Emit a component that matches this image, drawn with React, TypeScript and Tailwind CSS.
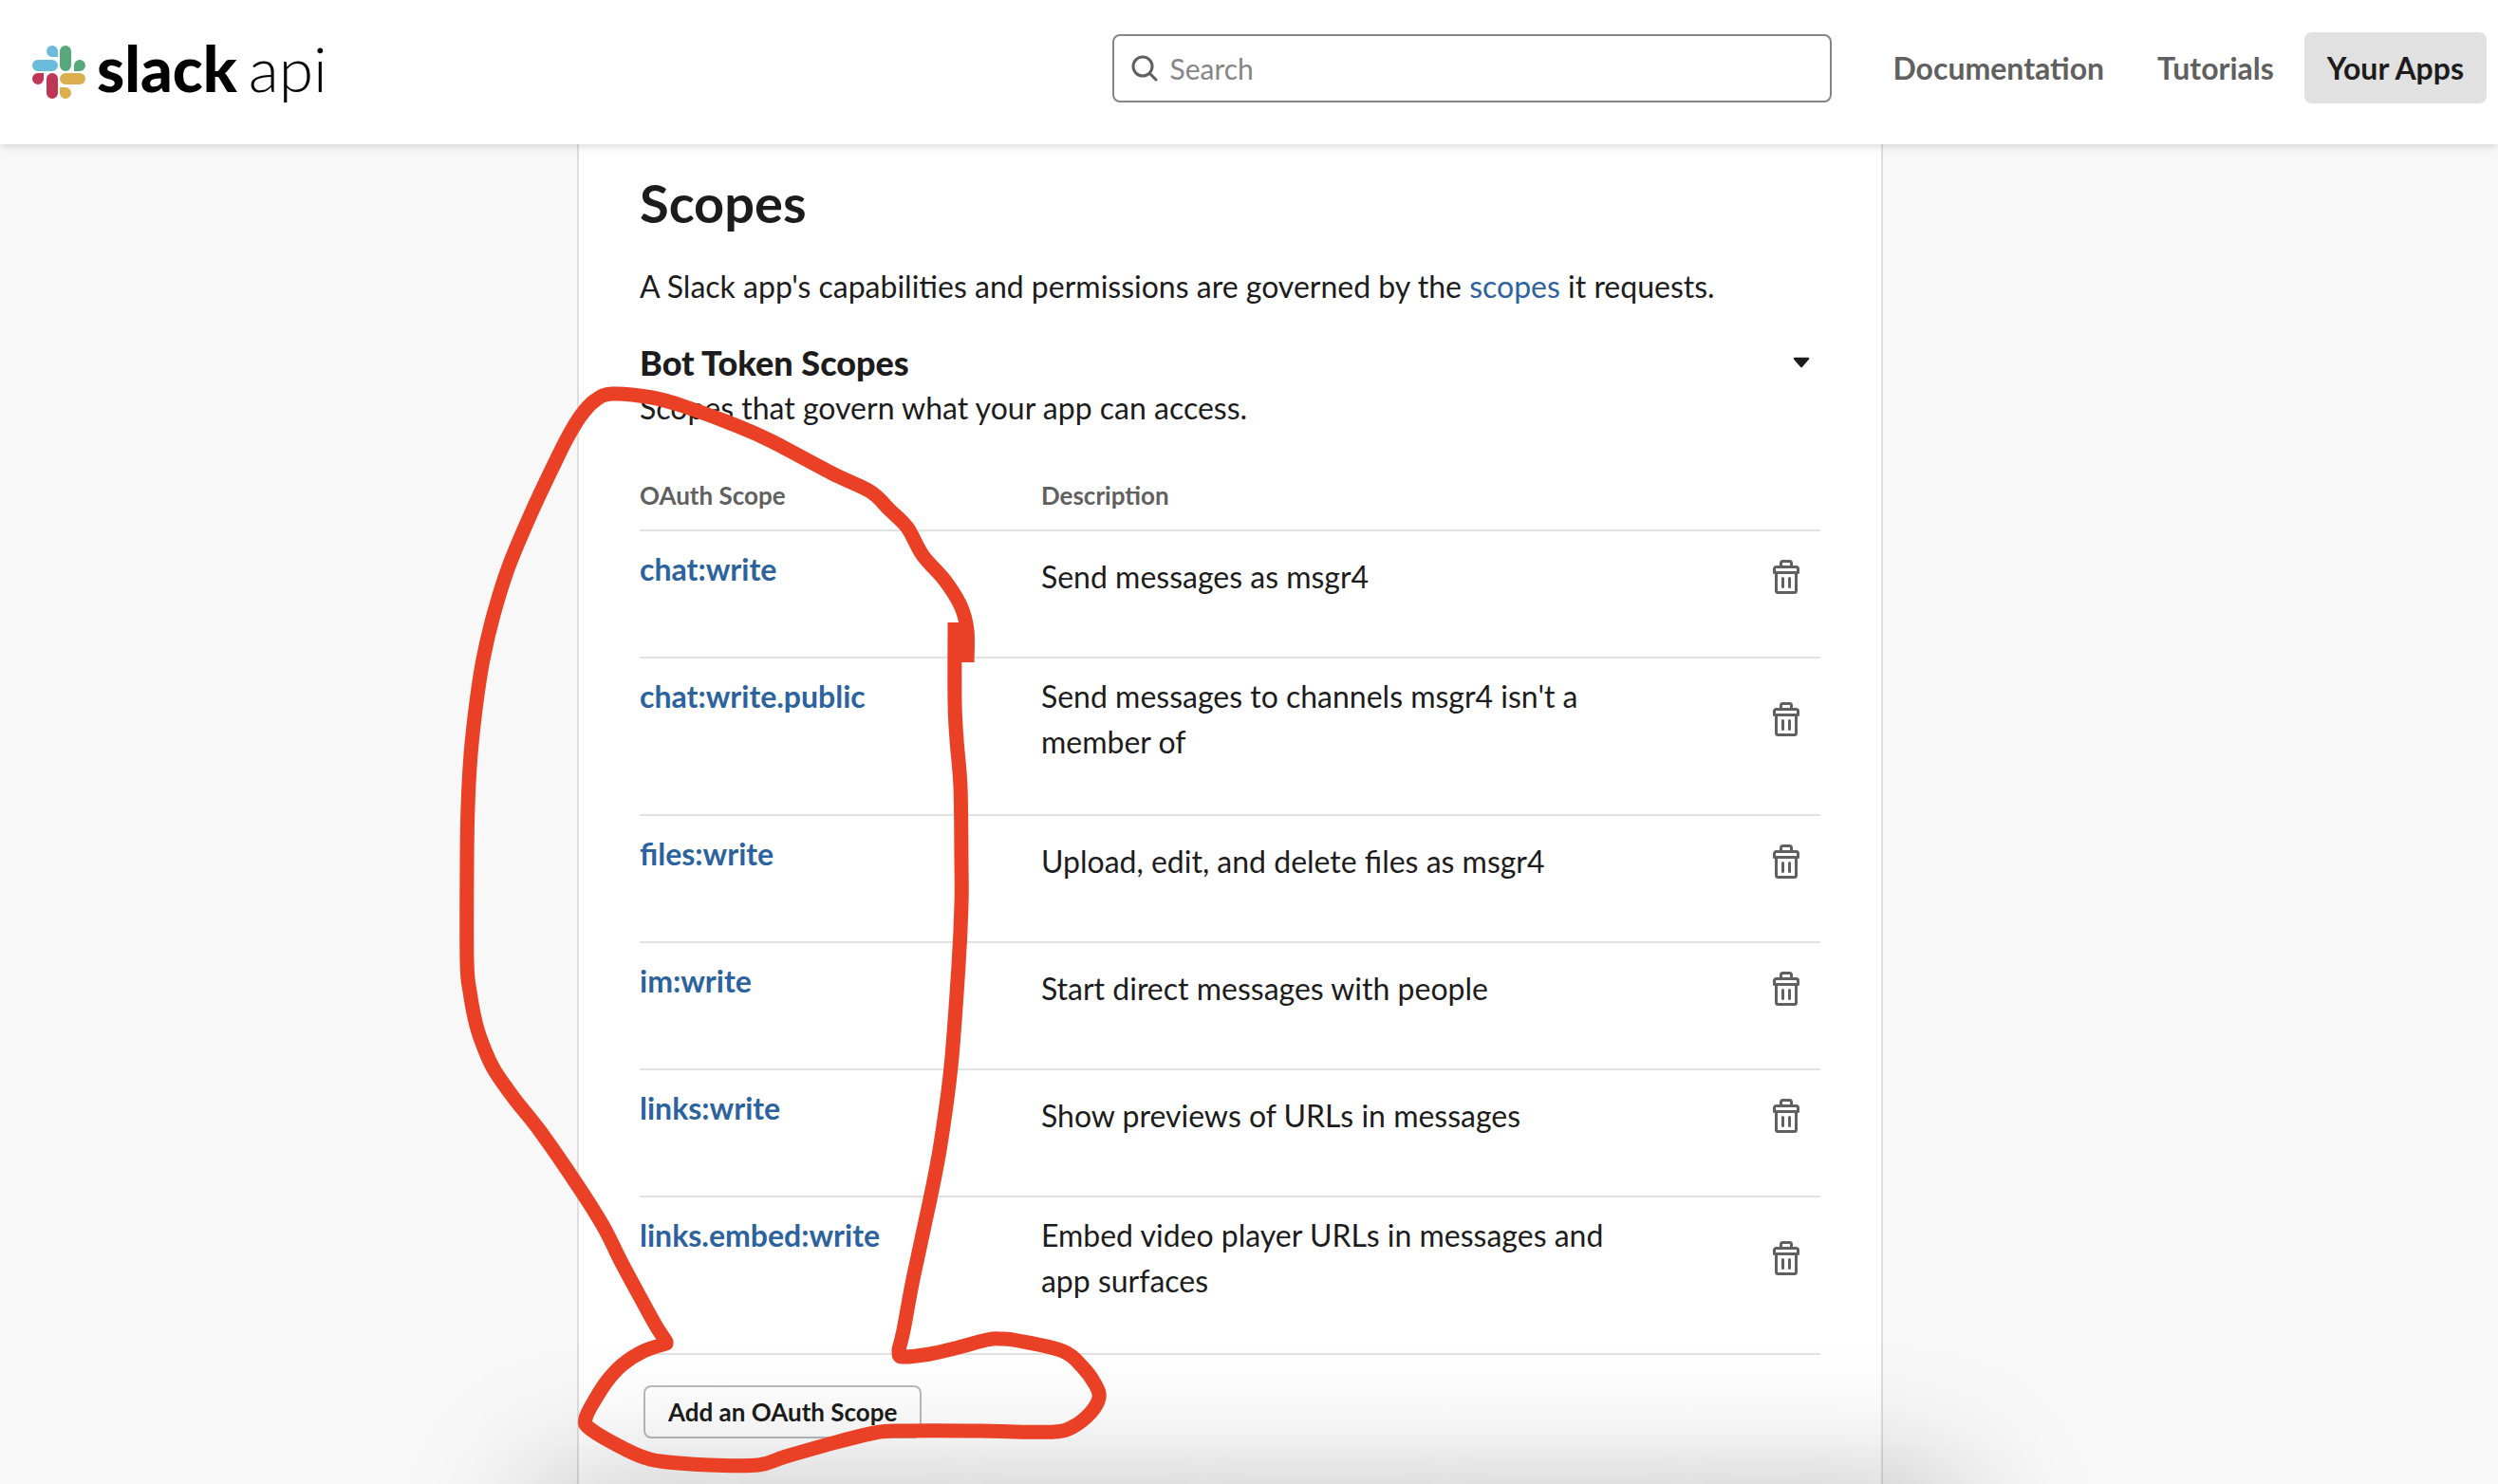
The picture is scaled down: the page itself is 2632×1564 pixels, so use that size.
import React from "react";

type Point = [number, number];

const scopes = [
  { name: "chat:write", description: "Send messages as msgr4" },
  { name: "chat:write.public", description: "Send messages to channels msgr4 isn't a member of" },
  { name: "files:write", description: "Upload, edit, and delete files as msgr4" },
  { name: "im:write", description: "Start direct messages with people" },
  { name: "links:write", description: "Show previews of URLs in messages" },
  { name: "links.embed:write", description: "Embed video player URLs in messages and app surfaces" },
];

// Three runs of the hand-drawn marker line; each starts where the previous one ends.
const markerRuns: Point[][] = [
  [
    [1019, 698], [1019, 664], [1012, 638], [995, 611], [972, 585], [956, 556], [937, 537], [917, 518],
    [877, 499], [813, 465], [777, 449], [720, 428], [687, 419], [645, 415], [627, 422], [612, 438],
    [598, 461], [584, 489], [560, 540], [536, 597], [520, 648], [509, 695], [502, 740], [496, 795],
    [493, 850], [492, 910], [492, 1013], [495, 1045], [502, 1081], [511, 1107], [521, 1128],
    [542, 1158], [569, 1192], [609, 1250], [636, 1293], [654, 1329], [675, 1368], [691, 1397], [702, 1414],
  ],
  [
    [702, 1416], [678, 1424], [656, 1438], [640, 1455], [627, 1475], [617, 1495], [622, 1506],
    [658, 1527], [685, 1538], [715, 1542], [747, 1544], [799, 1544], [828, 1535], [881, 1520],
    [922, 1510], [948, 1508], [1033, 1508], [1069, 1509], [1111, 1509], [1130, 1504], [1149, 1489],
    [1158, 1473], [1154, 1459], [1140, 1440], [1120, 1424], [1073, 1413], [1055, 1411], [1040, 1412],
    [1006, 1421], [980, 1427], [951, 1430], [947, 1426],
  ],
  [
    [947, 1422], [952, 1402], [962, 1348], [980, 1264], [991, 1206], [1002, 1124], [1010, 1017],
    [1013, 953], [1013, 910], [1012, 830], [1008, 780], [1006, 740], [1006, 656],
  ],
];

function smooth(points: Point[]): string {
  return points
    .slice(1)
    .map((end, i) => {
      const start = points[i];
      const before = points[i - 1] ?? start;
      const after = points[i + 2] ?? end;
      const c1 = [start[0] + (end[0] - before[0]) / 6, start[1] + (end[1] - before[1]) / 6];
      const c2 = [end[0] - (after[0] - start[0]) / 6, end[1] - (after[1] - start[1]) / 6];
      return `C${c1.join(" ")} ${c2.join(" ")} ${end.join(" ")}`;
    })
    .join(" ");
}

const markerPath = markerRuns
  .map((run, i) => `${i === 0 ? "M" : "L"}${run[0].join(" ")} ${smooth(run)}`)
  .join(" ");

function SlackMark() {
  return (
    <svg viewBox="0 0 56 56" className="size-14" aria-hidden="true">
      <path fill="#6ABBDC" d="M21 0a6 6 0 0 0 0 12h6V6a6 6 0 0 0-6-6ZM6 15a6 6 0 0 0 0 12h15a6 6 0 0 0 0-12Z" />
      <path fill="#57A97C" d="M35 0a6 6 0 0 0-6 6v15a6 6 0 0 0 12 0V6a6 6 0 0 0-6-6ZM56 21a6 6 0 0 0-12 0v6h6a6 6 0 0 0 6-6Z" />
      <path fill="#BF3756" d="M0 35a6 6 0 0 0 12 0v-6H6a6 6 0 0 0-6 6ZM21 29a6 6 0 0 0-6 6v15a6 6 0 0 0 12 0V35a6 6 0 0 0-6-6Z" />
      <path fill="#DBAF4E" d="M35 56a6 6 0 0 0 0-12h-6v6a6 6 0 0 0 6 6ZM50 41a6 6 0 0 0 0-12H35a6 6 0 0 0 0 12Z" />
    </svg>
  );
}

function TrashIcon() {
  return (
    <svg viewBox="0 0 28 36" className="h-9 w-7" fill="none" stroke="#616061" strokeWidth="3" strokeLinejoin="round" strokeLinecap="round" aria-hidden="true">
      <path d="M8.500 7V3.500a2 2 0 0 1 2-2h7a2 2 0 0 1 2 2V7" />
      <path d="M1.500 13.500v-4a2 2 0 0 1 2-2h21a2 2 0 0 1 2 2v4Z" />
      <path d="M3.500 14v18.500a2 2 0 0 0 2 2h17a2 2 0 0 0 2-2V14M10.500 19.500v9M17.500 19.500v9" />
    </svg>
  );
}

function Header() {
  return (
    <header className="relative z-10 flex h-[152px] shrink-0 items-start bg-white pr-3 pl-[34px] shadow-[0_1px_10px_rgba(0,0,0,0.18)]">
      <a href="#home" className="mt-9 flex h-20 items-center gap-3 text-black" aria-label="slack api">
        <SlackMark />
        <span className="flex items-baseline gap-3 pb-2 text-[66px] leading-[80px]">
          <span className="font-black">slack</span>
          <span className="font-light">api</span>
        </span>
      </a>
      <label className="mt-9 ml-auto flex h-[72px] w-[758px] items-center gap-3 rounded-lg border-2 border-[#868686] pl-[18px]">
        <svg viewBox="0 0 28 28" className="size-7" fill="none" stroke="#616061" strokeWidth="3" strokeLinecap="round" aria-hidden="true">
          <circle cx="12" cy="12" r="10" />
          <path d="m19.500 19.500 6.500 6.500" />
        </svg>
        <input type="text" placeholder="Search" aria-label="Search" className="min-w-0 flex-1 text-[30px] outline-none placeholder:text-[#868686]" />
      </label>
      <nav className="mt-[34px] ml-10 flex gap-2 text-[32px] leading-[75px] font-bold text-[#616061]">
        <a href="#documentation" className="px-6">Documentation</a>
        <a href="#tutorials" className="px-6">Tutorials</a>
        <a href="#apps" className="rounded-lg bg-[#e1e1e1] px-6 text-[#1d1c1d]">Your Apps</a>
      </nav>
    </header>
  );
}

function ScopeTable() {
  return (
    <table className="w-full table-fixed border-separate border-spacing-0 text-left">
      <thead className="text-[26px] leading-10 text-[#616061]">
        <tr>
          <th scope="col" className="w-[34%] border-b-2 border-[#e1e1e1] pb-4 font-bold">OAuth Scope</th>
          <th scope="col" className="w-1/2 border-b-2 border-[#e1e1e1] pb-4 font-bold">Description</th>
          <td className="border-b-2 border-[#e1e1e1]" />
        </tr>
      </thead>
      <tbody>
        {scopes.map((scope) => (
          <tr key={scope.name}>
            <td className="border-b-2 border-[#e1e1e1] pt-4 pb-[52px] align-top font-bold">
              <a href={`#${scope.name}`} className="text-[#2c639e]">{scope.name}</a>
            </td>
            <td className="border-b-2 border-[#e1e1e1] pt-4 pb-[52px] align-middle">{scope.description}</td>
            <td className="border-b-2 border-[#e1e1e1] pt-4 pr-1 pb-[52px] align-middle">
              <button type="button" aria-label={`Delete ${scope.name}`} className="ml-auto flex size-16 items-center justify-center">
                <TrashIcon />
              </button>
            </td>
          </tr>
        ))}
      </tbody>
    </table>
  );
}

export default function App() {
  return (
    <div className="relative flex min-h-screen flex-col overflow-hidden bg-[#f8f8f8] font-['Lato',sans-serif] text-[32px] leading-[48px] text-[#1d1c1d]">
      <Header />
      <main className="flex flex-1 justify-center pr-10">
        <section className="relative w-full max-w-[1376px] border-x-2 border-[#dddddd] bg-white px-16 pt-[30px] pb-8">
          <h1 className="text-[56px] leading-[64px] font-bold">Scopes</h1>
          <p className="mt-8">
            A Slack app's capabilities and permissions are governed by the{" "}
            <a href="#scopes" className="text-[#2c639e]">scopes</a> it requests.
          </p>
          <div className="mt-8 flex items-center justify-between pr-[11px]">
            <h2 className="text-[36px] leading-[48px] font-black">Bot Token Scopes</h2>
            <button type="button" aria-label="Collapse bot token scopes">
              <svg viewBox="0 0 18 12" className="h-3 w-[18px]" aria-hidden="true">
                <path d="M2 2h14L9 10Z" fill="#1d1c1d" stroke="#1d1c1d" strokeWidth="2.500" strokeLinejoin="round" />
              </svg>
            </button>
          </div>
          <p className="mb-12">Scopes that govern what your app can access.</p>
          <ScopeTable />
          <button type="button" className="mt-8 ml-1 h-14 rounded-lg border-2 border-[#bababa] bg-white px-6 text-[26px] leading-[48px] font-bold">
            Add an OAuth Scope
          </button>
        </section>
      </main>
      <div className="pointer-events-none absolute inset-x-[565px] -bottom-40 h-40 shadow-[0_0_140px_rgba(0,0,0,0.26)]" />
      <div className="pointer-events-none absolute inset-x-0 top-[400px] flex justify-center pr-10">
        <div className="w-full max-w-[1376px]">
          <svg viewBox="480 400 700 1160" className="-ml-32 h-[1160px] w-[700px]" aria-hidden="true">
            <path d={markerPath} fill="none" stroke="#ea4025" strokeWidth="15" strokeLinejoin="round" />
          </svg>
        </div>
      </div>
    </div>
  );
}
